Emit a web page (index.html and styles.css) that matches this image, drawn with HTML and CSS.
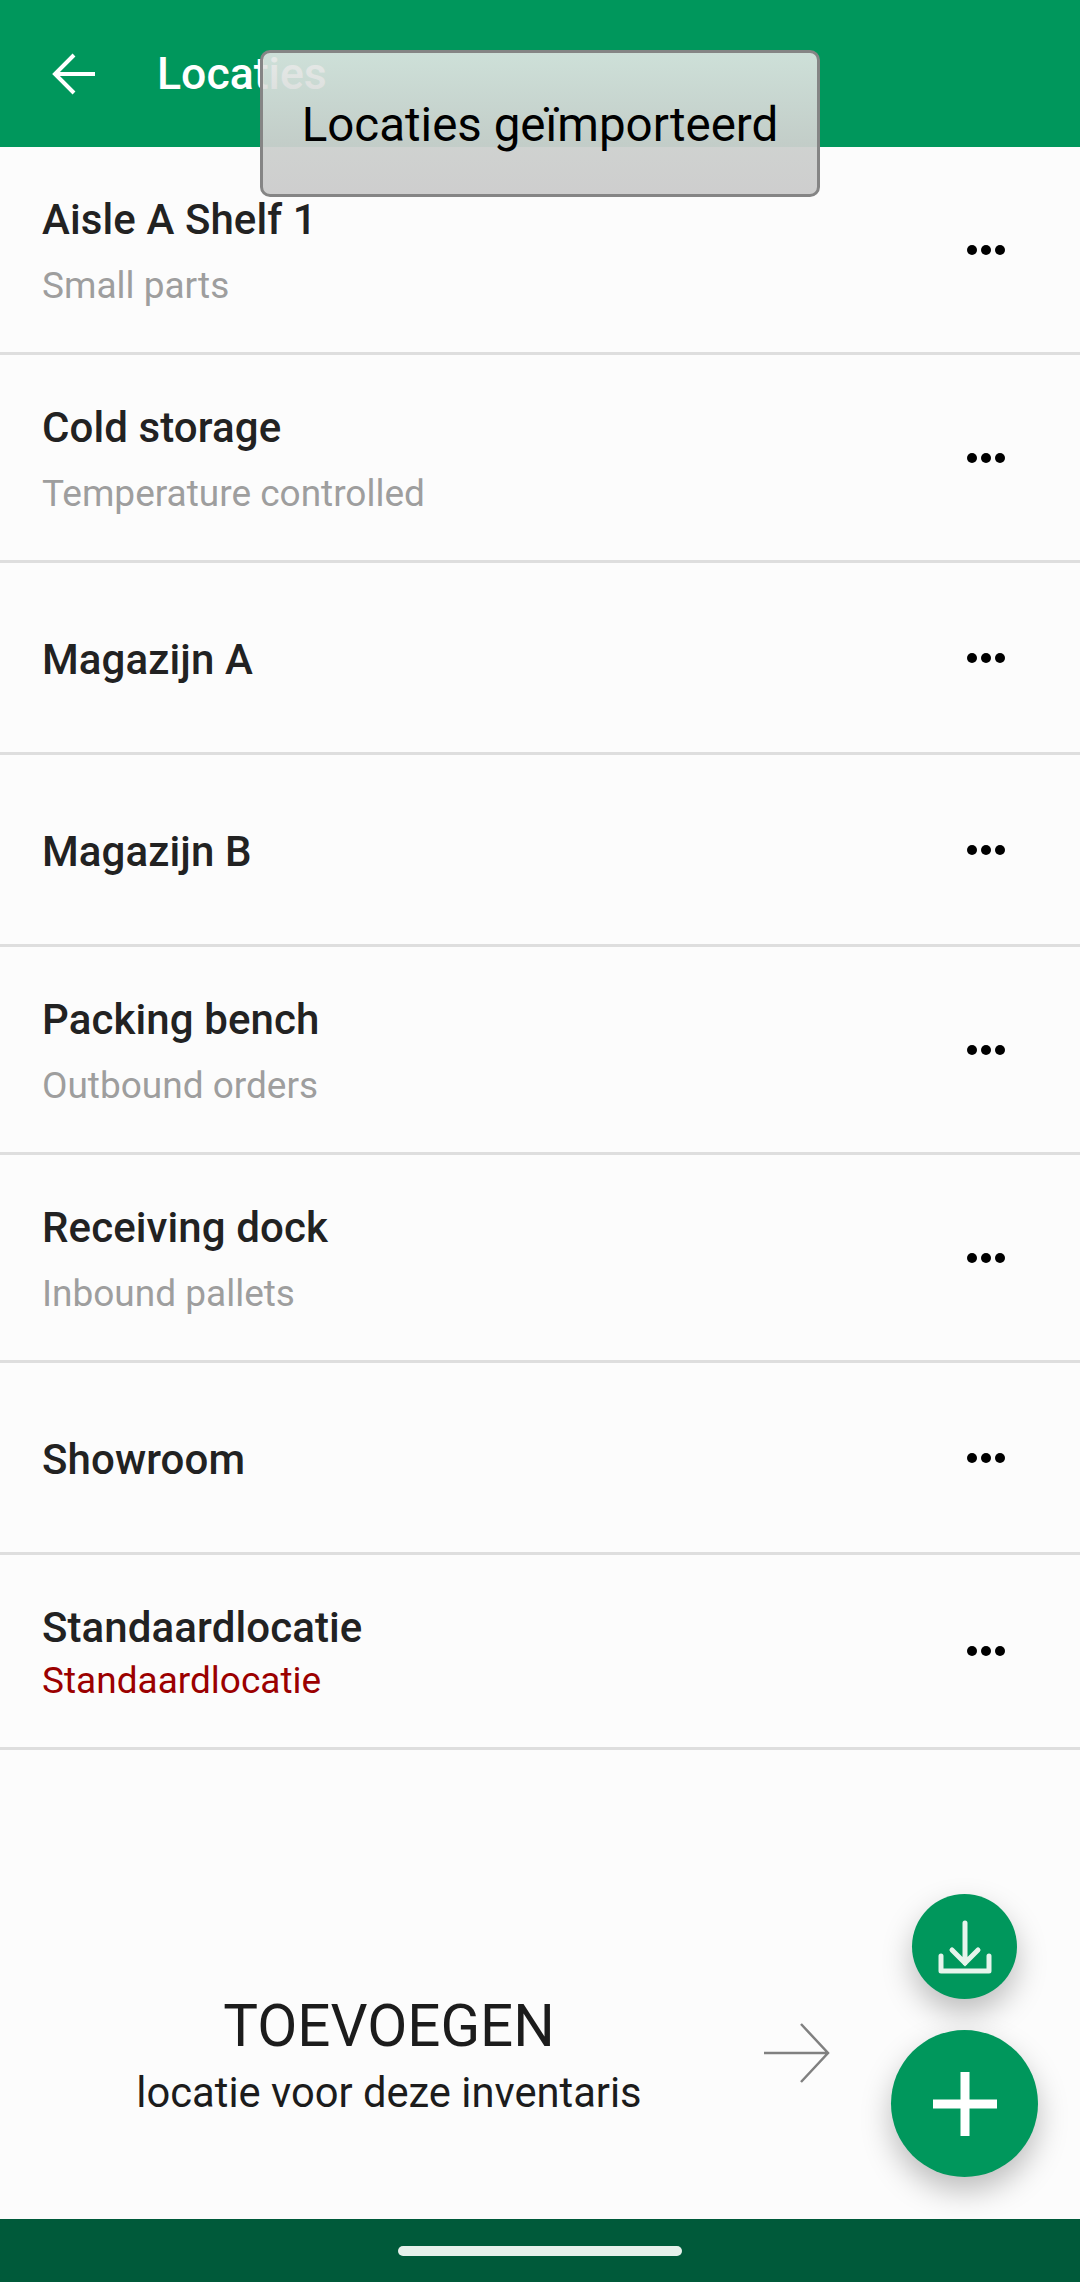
FILE: index.html
```html
<!DOCTYPE html>
<html lang="nl">
<head>
    <meta charset="UTF-8">
    <meta name="viewport" content="width=device-width, initial-scale=1.0">
    <title>Locaties</title>
    <link rel="stylesheet" href="styles.css">
</head>
<body>
    <div class="app">
        <header class="app-bar">
            <svg class="back-icon" viewBox="0 0 44 42" width="44" height="42">
                <path d="M43 21H4M22 2L3 21l19 19" fill="none" stroke="#fff" stroke-width="4"/>
            </svg>
            <h1 class="app-title">Locaties</h1>
        </header>

        <div class="toast">Locaties geïmporteerd</div>

        <ul class="location-list">
            <li class="location-item tall">
                <div class="location-text">
                    <span class="location-name">Aisle A Shelf 1</span>
                    <span class="location-note">Small parts</span>
                </div>
                <span class="more"><i></i><i></i><i></i></span>
            </li>
            <li class="location-item tall">
                <div class="location-text">
                    <span class="location-name">Cold storage</span>
                    <span class="location-note">Temperature controlled</span>
                </div>
                <span class="more"><i></i><i></i><i></i></span>
            </li>
            <li class="location-item">
                <div class="location-text">
                    <span class="location-name">Magazijn A</span>
                </div>
                <span class="more"><i></i><i></i><i></i></span>
            </li>
            <li class="location-item">
                <div class="location-text">
                    <span class="location-name">Magazijn B</span>
                </div>
                <span class="more"><i></i><i></i><i></i></span>
            </li>
            <li class="location-item tall">
                <div class="location-text">
                    <span class="location-name">Packing bench</span>
                    <span class="location-note">Outbound orders</span>
                </div>
                <span class="more"><i></i><i></i><i></i></span>
            </li>
            <li class="location-item tall">
                <div class="location-text">
                    <span class="location-name">Receiving dock</span>
                    <span class="location-note">Inbound pallets</span>
                </div>
                <span class="more"><i></i><i></i><i></i></span>
            </li>
            <li class="location-item">
                <div class="location-text">
                    <span class="location-name">Showroom</span>
                </div>
                <span class="more"><i></i><i></i><i></i></span>
            </li>
            <li class="location-item default">
                <div class="location-text">
                    <span class="location-name">Standaardlocatie</span>
                    <span class="location-default">Standaardlocatie</span>
                </div>
                <span class="more"><i></i><i></i><i></i></span>
            </li>
        </ul>

        <div class="add-hint">
            <div class="add-hint-text">
                <div class="add-hint-title">TOEVOEGEN</div>
                <div class="add-hint-sub">locatie voor deze inventaris</div>
            </div>
            <svg class="add-hint-arrow" viewBox="0 0 66 60" width="66" height="60">
                <path d="M0 30H64M37 1l27 29-27 29" fill="none" stroke="#808080" stroke-width="2.5"/>
            </svg>
        </div>

        <div class="nav-bar"><span class="nav-pill"></span></div>

        <button class="fab fab-small">
            <svg viewBox="0 0 54 54" width="54" height="54">
                <path d="M27 3V43M14 30l13 13 13-13" fill="none" stroke="#e6f4ec" stroke-width="5" stroke-linecap="round"/>
                <path d="M3 36V51H51V36" fill="none" stroke="#e6f4ec" stroke-width="5" stroke-linecap="round" stroke-linejoin="round"/>
            </svg>
        </button>
        <button class="fab fab-large">
            <svg viewBox="0 0 64 64" width="64" height="64">
                <path d="M32 0V64M0 32H64" fill="none" stroke="#fff" stroke-width="9"/>
            </svg>
        </button>
    </div>
</body>
</html>
```

FILE: styles.css
```css
* {
    box-sizing: border-box;
}

body {
    margin: 0;
    background: #fcfcfc;
    font-family: Roboto, "Liberation Sans", sans-serif;
}

.app {
    position: relative;
    display: flex;
    flex-direction: column;
    height: 2282px;
    overflow: hidden;
}

.app-bar {
    display: flex;
    align-items: center;
    gap: 61px;
    height: 147px;
    padding-left: 52px;
    background: #00975c;
    flex-shrink: 0;
}

.back-icon {
    flex-shrink: 0;
}

.app-title {
    margin: 0;
    font-size: 44.6px;
    font-weight: 500;
    color: #fff;
}

.toast {
    position: absolute;
    left: 260px;
    top: 50px;
    width: 560px;
    height: 147px;
    display: flex;
    align-items: center;
    justify-content: center;
    padding-top: 2px;
    border: 3px solid #858585;
    border-radius: 10px;
    background: linear-gradient(180deg, rgba(228, 232, 230, 0.9) 0%, rgba(205, 208, 206, 0.95) 65%, rgba(205, 205, 205, 0.98) 100%);
    font-size: 47.5px;
    color: #000;
}

.location-list {
    margin: 0;
    padding: 0;
    list-style: none;
}

.location-item {
    display: flex;
    align-items: center;
    justify-content: space-between;
    height: 192px;
    padding: 0 75px 0 42px;
    border-bottom: 3px solid #dedede;
}

.location-item.tall {
    height: 208px;
}

.location-item.default {
    height: 195px;
}

.location-text {
    display: flex;
    flex-direction: column;
    padding-top: 3px;
}

.location-name {
    font-size: 42px;
    font-weight: 500;
    letter-spacing: 0.1px;
    line-height: 47px;
    color: #222;
}

.location-note {
    margin-top: 22px;
    font-size: 37px;
    line-height: 42px;
    color: #9e9e9e;
}

.location-default {
    margin-top: 9px;
    font-size: 37px;
    line-height: 42px;
    color: #9b0000;
}

.more {
    display: flex;
    gap: 4px;
}

.more i {
    width: 10px;
    height: 10px;
    border-radius: 50%;
    background: #000;
}

.add-hint {
    flex: 1;
    display: flex;
    align-items: flex-end;
    padding: 0 0 100px 0;
}

.add-hint-text {
    width: 778px;
    text-align: center;
}

.add-hint-title {
    font-size: 58.3px;
    line-height: 68px;
    color: #1c1c1c;
}

.add-hint-sub {
    margin-top: 7px;
    font-size: 41.7px;
    line-height: 52px;
    color: #1c1c1c;
}

.add-hint-arrow {
    margin: 0 0 36px -14px;
}

.nav-bar {
    display: flex;
    justify-content: center;
    height: 63px;
    padding-top: 27px;
    background: #005a3a;
    flex-shrink: 0;
}

.nav-pill {
    width: 284px;
    height: 10px;
    border-radius: 5px;
    background: #e6f0eb;
}

.fab {
    position: absolute;
    display: flex;
    align-items: center;
    justify-content: center;
    padding: 0;
    border: 0;
    border-radius: 50%;
    background: #00975c;
    box-shadow: 0 14px 30px rgba(0, 0, 0, 0.25);
}

.fab-small {
    left: 912px;
    top: 1894px;
    width: 105px;
    height: 105px;
}

.fab-large {
    left: 891px;
    top: 2030px;
    width: 147px;
    height: 147px;
}
```
